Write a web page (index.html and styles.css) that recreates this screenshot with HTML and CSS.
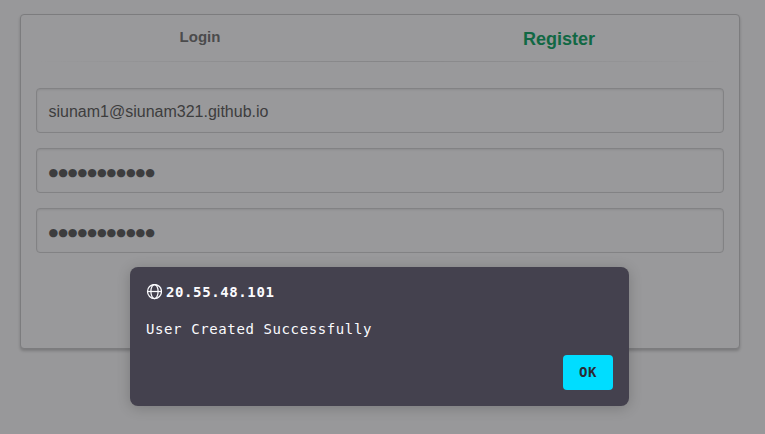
FILE: index.html
```
<!DOCTYPE html>
<html lang="en">
<head>
<meta charset="utf-8">
<title>Register</title>
<link rel="stylesheet" href="styles.css">
</head>
<body>
<main class="panel">
  <nav class="tabs">
    <a class="tab">Login</a>
    <a class="tab active">Register</a>
  </nav>
  <div class="rule"></div>
  <form class="fields">
    <div class="field">siunam1@siunam321.github.io</div>
    <div class="field"><span class="mask">●●●●●●●●●●●</span></div>
    <div class="field"><span class="mask">●●●●●●●●●●●</span></div>
  </form>
</main>
<section class="dialog" role="alertdialog">
  <header class="origin">
    <svg class="globe" viewBox="0 0 16 16" fill="none" stroke="currentColor" stroke-width="1.25">
      <circle cx="8.5" cy="7.5" r="7"/>
      <ellipse cx="8.5" cy="7.5" rx="3.6" ry="7"/>
      <path d="M1.5 7.5h14"/>
    </svg>
    <span>20.55.48.101</span>
  </header>
  <p class="message">User Created Successfully</p>
  <button class="ok" type="button">OK</button>
</section>
</body>
</html>
```
FILE: styles.css
```
* { box-sizing: border-box; }
body {
  margin: 0;
  height: 434px;
  padding: 14px 25px 0 20px;
  overflow: hidden;
  background: #98989a;
  font-family: "Liberation Sans", sans-serif;
}
.panel {
  height: 335px;
  padding: 0 15px;
  border: 1px solid #7c7c7e;
  border-radius: 4px;
  background: #99999b;
  box-shadow: 0 2px 3px rgba(0, 0, 0, .2);
}
.tabs {
  display: grid;
  grid-template-columns: 1fr 1fr;
  height: 46px;
  text-align: center;
}
.tab {
  padding-top: 13px;
  padding-right: 16px;
  font-size: 15px;
  line-height: 18px;
  font-weight: bold;
  color: #4b4b4c;
}
.tab.active {
  padding: 13px 0 0 14px;
  font-size: 18px;
  line-height: 22px;
  color: #116844;
}
.rule {
  height: 1px;
  margin: 0 0 26px;
  background: linear-gradient(to right, transparent, #868688 50%, transparent);
}
.fields {
  display: grid;
  gap: 15px;
}
.field {
  display: flex;
  align-items: center;
  height: 45px;
  padding: 2px 11.5px 0;
  border: 1px solid #828284;
  border-radius: 4px;
  box-shadow: inset 0 1px 2px rgba(0, 0, 0, .09);
  font-size: 16px;
  color: #3d3d3e;
}
.mask {
  padding-top: 2px;
  font: 11.1px/20px "DejaVu Sans", sans-serif;
}
.dialog {
  position: absolute;
  left: 130px;
  top: 267px;
  width: 499px;
  height: 139px;
  display: flex;
  flex-direction: column;
  padding: 16px;
  border-radius: 8px;
  background: #44414e;
  box-shadow: 0 2px 14px rgba(0, 0, 0, .2);
  color: #fbfbfe;
  font: 14px/18px "DejaVu Sans Mono", monospace;
  letter-spacing: .61px;
}
.origin {
  display: flex;
  align-items: center;
  gap: 4px;
  font-weight: bold;
}
.globe {
  width: 16px;
  height: 16px;
}
.message {
  margin: 19px 0 0;
}
.ok {
  align-self: flex-end;
  margin-top: auto;
  width: 50px;
  height: 35px;
  padding: 0 0 2px;
  border: 0;
  border-radius: 4px;
  background: #00ddff;
  color: #2b2a33;
  font: bold 14px "DejaVu Sans Mono", monospace;
  letter-spacing: .57px;
}
```
